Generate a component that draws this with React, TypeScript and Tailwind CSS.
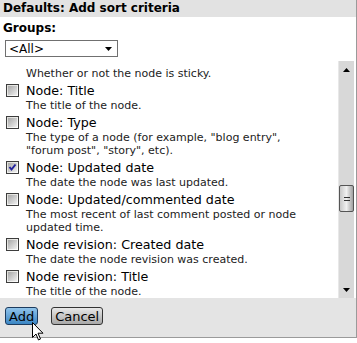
import React from "react";

const items: { label: string; desc: string[]; checked?: boolean }[] = [
  { label: "Node: Title", desc: ["The title of the node."] },
  { label: "Node: Type", desc: ['The type of a node (for example, "blog entry",', '"forum post", "story", etc).'] },
  { label: "Node: Updated date", desc: ["The date the node was last updated."], checked: true },
  { label: "Node: Updated/commented date", desc: ["The most recent of last comment posted or node", "updated time."] },
  { label: "Node revision: Created date", desc: ["The date the node revision was created."] },
  { label: "Node revision: Title", desc: ["The title of the node."] },
];

function Checkbox({ checked }: { checked?: boolean }) {
  return (
    <div className="w-[13px] h-[13px] border border-[#3d3d3d] bg-gradient-to-br from-[#dcdcd7] to-[#ffffff] flex items-center justify-center shrink-0">
      <div className="w-[9px] h-[9px] bg-gradient-to-br from-[#a8a8a8] to-[#f0f0f0] flex items-center justify-center">
        {checked && (
          <svg width="9" height="9" viewBox="0 0 9 9">
            <path d="M1.5 4 L3.5 6.5 L7.5 1.5" stroke="#21219c" strokeWidth="2" fill="none" />
          </svg>
        )}
      </div>
    </div>
  );
}

export default function App() {
  return (
    <div className="relative w-[357px] h-[343px] bg-white" style={{ fontFamily: '"DejaVu Sans", Verdana, sans-serif' }}>
      <div className="w-[357px] h-[338px] border-r border-b border-[#9a9a9a] flex flex-col">
        <div className="h-[17px] bg-[#e2e2e2] px-[3px] text-[12px] font-bold leading-[17px] text-black">
          Defaults: Add sort criteria
        </div>
        <div className="pt-[4px] px-[3px] text-[12px] font-bold leading-[15px] text-black">Groups:</div>
        <div className="pl-[5px] pt-[4px]">
          <div className="w-[113px] h-[17px] border border-[#707070] flex items-center justify-between pl-[3px] pr-[5px] text-[12px] leading-none">
            <span>&lt;All&gt;</span>
            <svg width="7" height="4" viewBox="0 0 7 4"><path d="M0 0 H7 L3.5 4 Z" fill="#000" /></svg>
          </div>
        </div>
        <div className="mt-[4px] h-[237px] flex">
          <div className="flex-1 overflow-hidden pl-[6px] pt-[6px]">
            <div className="pl-[20px] text-[11px] leading-[13px] text-[#222] whitespace-nowrap">Whether or not the node is sticky.</div>
            {items.map((it) => (
              <div key={it.label} className="mt-[2px]">
                <div className="flex items-center h-[17px]">
                  <Checkbox checked={it.checked} />
                  <span className="ml-[7px] text-[12.7px] leading-[17px] text-black whitespace-nowrap">{it.label}</span>
                </div>
                {it.desc.map((d) => (
                  <div key={d} className="pl-[20px] text-[11px] leading-[13px] text-[#222] whitespace-nowrap">{d}</div>
                ))}
              </div>
            ))}
          </div>
          <div className="w-[16px] mr-[2px] bg-[#d8d8d8] border-l border-[#e8e8e8] flex flex-col items-center">
            <div className="h-[17px] flex items-center justify-center">
              <svg width="7" height="4" viewBox="0 0 7 4"><path d="M3.5 0 L7 4 H0 Z" fill="#000" /></svg>
            </div>
            <div className="mt-[107px] w-[15px] h-[27px] border border-[#555] rounded-[2px] bg-gradient-to-r from-[#c8c8c8] via-[#f0f0f0] to-[#a0a0a0] flex flex-col items-center justify-center gap-[2px]">
              <div className="w-[6px] h-[1px] bg-[#333]" />
              <div className="w-[6px] h-[1px] bg-[#333]" />
            </div>
            <div className="flex-1" />
            <div className="h-[17px] flex items-center justify-center">
              <svg width="7" height="4" viewBox="0 0 7 4"><path d="M0 0 H7 L3.5 4 Z" fill="#000" /></svg>
            </div>
          </div>
        </div>
        <div className="flex-1 bg-[#e4e4e4] flex items-start gap-[13px] pl-[5px] pt-[9px]">
          <button className="h-[18px] px-[3px] rounded-[3px] border border-[#1c3b5e] bg-gradient-to-b from-[#8fc3ea] to-[#3a86c4] text-[13px] leading-none text-black">Add</button>
          <button className="h-[18px] px-[3px] rounded-[3px] border border-[#333] bg-gradient-to-b from-[#e8e8e8] to-[#a8a8a8] text-[13px] leading-none text-black">Cancel</button>
        </div>
      </div>
      <svg className="absolute left-[32px] top-[322px]" width="12" height="19" viewBox="0 0 12 19">
        <path d="M0.5 0.5 L0.5 15.5 L4 12 L6.5 18 L8.5 17 L6 11.2 L11 11.2 Z" fill="#fff" stroke="#000" strokeWidth="1" strokeLinejoin="miter" />
      </svg>
    </div>
  );
}
